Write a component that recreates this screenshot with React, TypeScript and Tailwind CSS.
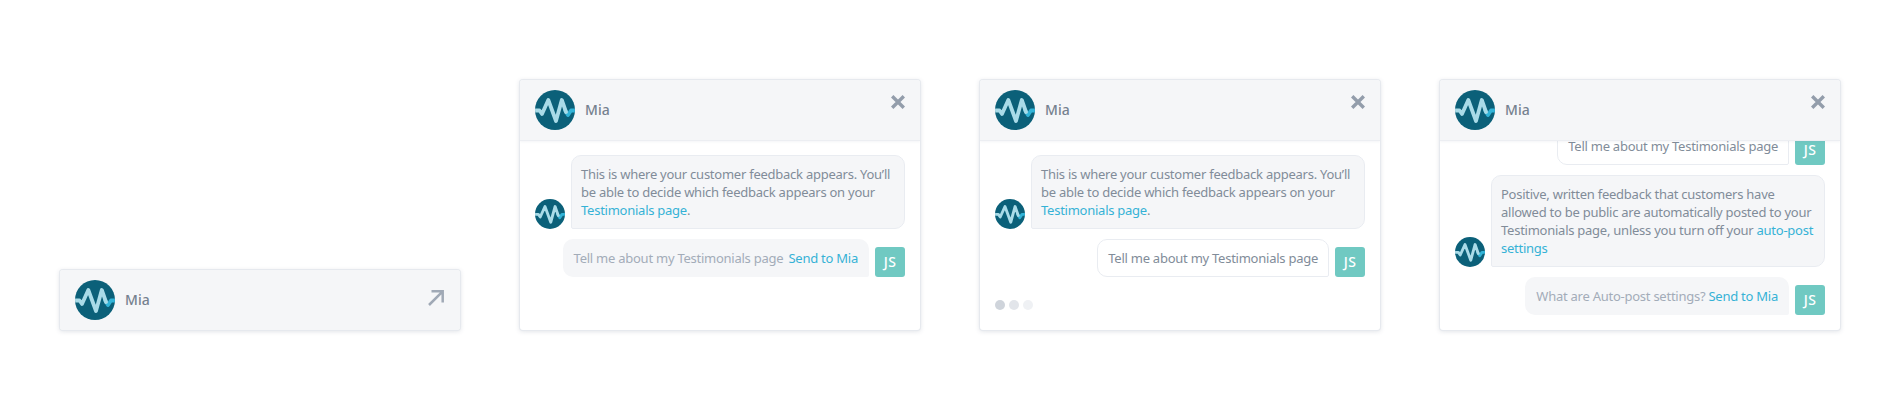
function Logo({ size }: { size: number }) {
  return (
    <svg width={size} height={size} viewBox="0 0 40 40" className="block shrink-0">
      <defs>
        <clipPath id={`logo-clip-${size}`}>
          <circle cx="20" cy="20" r="20" />
        </clipPath>
      </defs>
      <circle cx="20" cy="20" r="20" fill="#0b6079" />
      <g clipPath={`url(#logo-clip-${size})`} fill="none" strokeWidth="3.8" strokeLinecap="round" strokeLinejoin="round">
        <path d="M30 20 L33 25 L36 20.5 H41" stroke="#32b4d8" />
        <path d="M-1 20.5 H4.5 L7 24 L13.3 10 L21 31 L26.8 10 L31 22" stroke="#a9dbe8" />
      </g>
    </svg>
  );
}

function Header({ icon }: { icon: "x" | "arrow" }) {
  return (
    <div
      className={
        icon === "x"
          ? "relative z-10 flex h-[61px] shrink-0 items-center justify-between border-b border-[#eceef2] bg-[#f5f6f8] px-[15px] shadow-[0_1px_2px_rgba(120,130,150,0.08)]"
          : "relative z-10 flex h-[60px] shrink-0 items-center justify-between bg-[#f5f6f8] px-[15px]"
      }
    >
      <div className="flex items-center gap-[10px]">
        <Logo size={40} />
        <span className="text-[14px] font-medium tracking-[0.1px] text-[#76818f]">Mia</span>
      </div>
      {icon === "x" ? (
        <svg width="14" height="14" viewBox="0 0 14 14" className="mb-[17px]">
          <path d="M1.2 1.2 L12.8 12.8 M12.8 1.2 L1.2 12.8" stroke="#939dab" strokeWidth="3.4" />
        </svg>
      ) : (
        <svg width="16" height="16" viewBox="0 0 16 16" className="mb-[4px] mr-[1px]">
          <path d="M1 15 L14.2 1.8 M3.5 1.3 H14.7 V12.5" fill="none" stroke="#a0a9b6" strokeWidth="2.5" />
        </svg>
      )}
    </div>
  );
}

function Initials() {
  return (
    <div className="flex h-[30px] w-[30px] shrink-0 items-center justify-center rounded-[3px] bg-[#70c9c2] text-[14px] font-medium tracking-[0.4px] text-white">
      JS
    </div>
  );
}

function Link({ children }: { children: React.ReactNode }) {
  return <span className="text-[#35b2d6]">{children}</span>;
}

function MiaRow({ children }: { children: React.ReactNode }) {
  return (
    <div className="flex shrink-0 items-end gap-[6px]">
      <Logo size={30} />
      <div className="w-[334px] whitespace-nowrap rounded-[10px] rounded-bl-[2px] border border-[#e9ecf1] bg-[#f5f6f8] p-[9px] text-[#818c99]">
        {children}
      </div>
    </div>
  );
}

function UserRow({ children, filled }: { children: React.ReactNode; filled?: boolean }) {
  return (
    <div className="flex shrink-0 items-end justify-end gap-[6px]">
      <div
        className={
          filled
            ? "whitespace-nowrap rounded-[10px] rounded-br-[2px] bg-[#f5f6f8] px-[11px] py-[10px] text-[#a3acb8]"
            : "whitespace-nowrap rounded-[10px] rounded-br-[2px] border border-[#e9ecf1] bg-white px-[10px] py-[9px] text-[#818c99]"
        }
      >
        {children}
      </div>
      <Initials />
    </div>
  );
}

function Chat({ children, end }: { children: React.ReactNode; end?: boolean }) {
  return (
    <div className="flex h-[250px] w-[400px] flex-col overflow-hidden rounded-[3px] bg-white shadow-[0_0_0_1px_#e6e9ee,0_1px_4px_1px_rgba(120,130,150,0.2)]">
      <Header icon="x" />
      <div
        className={
          end
            ? "flex min-h-0 flex-1 flex-col justify-end gap-[10px] px-[15px] pb-[15px]"
            : "flex min-h-0 flex-1 flex-col gap-[10px] px-[15px] pt-[14px]"
        }
      >
        {children}
      </div>
    </div>
  );
}

const intro = (
  <MiaRow>
    This is where your customer feedback appears. You’ll
    <br />
    be able to decide which feedback appears on your
    <br />
    <Link>Testimonials page</Link>.
  </MiaRow>
);

export default function App() {
  return (
    <div className="flex h-[410px] w-[1900px] items-end gap-[60px] bg-white pb-[80px] pl-[60px] text-[13px] leading-[18px] tracking-[-0.25px] [font-family:'Noto_Sans','Liberation_Sans',sans-serif]">
      <div className="w-[400px] overflow-hidden rounded-[3px] shadow-[0_0_0_1px_#e6e9ee,0_1px_4px_1px_rgba(120,130,150,0.2)]">
        <Header icon="arrow" />
      </div>
      <Chat>
        {intro}
        <UserRow filled>
          Tell me about my Testimonials page <span className="ml-[2px]"><Link>Send to Mia</Link></span>
        </UserRow>
      </Chat>
      <Chat>
        {intro}
        <UserRow>Tell me about my Testimonials page</UserRow>
        <div className="mt-[13px] flex gap-[4px]">
          <span className="h-[10px] w-[10px] rounded-full bg-[#cfd4db]" />
          <span className="h-[10px] w-[10px] rounded-full bg-[#e2e5ea]" />
          <span className="h-[10px] w-[10px] rounded-full bg-[#eff1f4]" />
        </div>
      </Chat>
      <Chat end>
        <UserRow>Tell me about my Testimonials page</UserRow>
        <MiaRow>
          Positive, written feedback that customers have
          <br />
          allowed to be public are automatically posted to your
          <br />
          Testimonials page, unless you turn off your <Link>auto-post</Link>
          <br />
          <Link>settings</Link>
        </MiaRow>
        <UserRow filled>
          What are Auto-post settings? <Link>Send to Mia</Link>
        </UserRow>
      </Chat>
    </div>
  );
}
